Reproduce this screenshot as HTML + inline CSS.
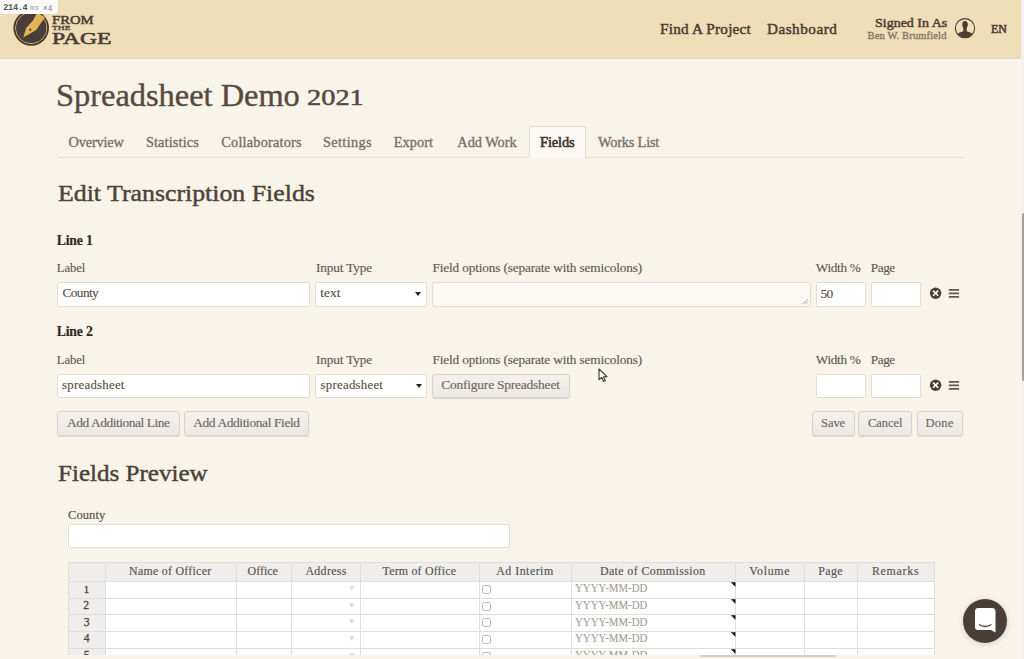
<!DOCTYPE html>
<html><head><meta charset="utf-8"><style>
html,body{margin:0;padding:0;}
body{width:1024px;height:659px;overflow:hidden;position:relative;background:#f9f4ea;font-family:"Liberation Serif",serif;}
.tx{position:absolute;white-space:nowrap;line-height:1;}
.bx{position:absolute;box-sizing:border-box;}
.inp{position:absolute;box-sizing:border-box;background:#fff;border:1px solid #e2ddd6;border-radius:2px;}
.btn{position:absolute;box-sizing:border-box;border:1px solid #d9d3cb;border-radius:3px;background:linear-gradient(#f4f1ee,#ece8e4);box-shadow:0 1px 1px rgba(0,0,0,0.12);}
</style></head><body>
<!-- header -->
<div class="bx" style="left:0;top:0;width:1021px;height:58px;background:#f0deb9"></div>
<div class="bx" style="left:0;top:57px;width:1021px;height:1px;background:#e9d9c0"></div>
<div class="bx" style="left:0;top:58px;width:1021px;height:1px;background:#e4d8c8"></div>
<div class="bx" style="left:0;top:59px;width:1021px;height:2px;background:#fcf6ec"></div>
<div class="bx" style="left:1021px;top:0;width:3px;height:659px;background:#f1f0ee"></div>
<div class="bx" style="left:1022px;top:213px;width:2px;height:168px;background:#a3a19e;border-radius:1px"></div>
<!-- logo -->
<svg class="bx" style="left:12px;top:9px" width="38" height="38" viewBox="0 0 38 38">
<circle cx="19.2" cy="19" r="17.8" fill="#4d3a26"/>
<circle cx="19.2" cy="19" r="15.6" fill="none" stroke="#c9b28c" stroke-width="1"/>
<circle cx="19.2" cy="19" r="15" fill="#4a3d3a"/>
<path d="M11.2 28.6 L14.3 18.8 L21 11.6 L25.2 3.5 L28.5 5.5 L33 8.5 L28 15.5 L24.2 21 Z" fill="#e3b456"/>
<circle cx="18.2" cy="20.6" r="1.2" fill="#4a3d3a"/>
</svg>
<div class="bx" style="left:0;top:0;width:58px;height:13.5px;background:#fdfdfc;border-bottom-right-radius:4px;box-shadow:0 0 1px rgba(0,0,0,0.2)"></div>
<!-- avatar -->
<svg class="bx" style="left:954px;top:17px" width="22" height="22" viewBox="0 0 22 22">
<circle cx="11" cy="11.2" r="9.6" fill="none" stroke="#4a3d31" stroke-width="1.1"/>
<clipPath id="cc"><circle cx="11" cy="11.2" r="9.1"/></clipPath>
<g clip-path="url(#cc)" fill="#4a3d31"><ellipse cx="11" cy="7.6" rx="2.8" ry="3.7"/><path d="M9.3 10 H12.7 V15 H9.3Z"/><path d="M1 22 Q1.8 16 8.5 14.6 L13.5 14.6 Q20.2 16 21 22 Z"/></g>
</svg>
<!-- tabs -->
<div class="bx" style="left:57px;top:157px;width:907px;height:1px;background:#e3ddd4"></div>
<div class="bx" style="left:529px;top:126px;width:57px;height:32px;background:#fcf8f4;border:1px solid #e3ddd4;border-bottom:none;border-radius:3px 3px 0 0"></div>
<!-- line 1 inputs -->
<div class="inp" style="left:57px;top:281.5px;width:253px;height:25px"></div>
<div class="inp" style="left:315px;top:282px;width:112px;height:24.5px"></div>
<svg class="bx" style="left:415px;top:292px" width="6" height="5"><path d="M0 0H6L3 4Z" fill="#222"/></svg>
<div class="inp" style="left:432px;top:281.5px;width:378.5px;height:25px;background:#fbf8f4"></div>
<svg class="bx" style="left:802px;top:298px" width="7" height="7"><path d="M6 1L1 6M6 3.5L3.5 6" stroke="#999" stroke-width="0.8"/></svg>
<div class="inp" style="left:815.5px;top:281.5px;width:50.5px;height:25px"></div>
<div class="inp" style="left:870.5px;top:281.5px;width:50.5px;height:25px"></div>
<!-- line 2 inputs -->
<div class="inp" style="left:57px;top:373.5px;width:253px;height:24.5px"></div>
<div class="inp" style="left:315px;top:373.8px;width:112px;height:24px"></div>
<svg class="bx" style="left:415.5px;top:383.5px" width="6" height="5"><path d="M0 0H6L3 4Z" fill="#222"/></svg>
<div class="btn" style="left:432px;top:373.5px;width:138px;height:24.5px"></div>
<div class="inp" style="left:815.5px;top:373.5px;width:50.5px;height:24.5px"></div>
<div class="inp" style="left:870.5px;top:373.5px;width:50.5px;height:24.5px"></div>
<!-- icons -->
<svg class="bx" style="left:929px;top:287px" width="13" height="13" viewBox="0 0 13 13"><circle cx="6.6" cy="6.2" r="5.7" fill="#4a3e36"/><path d="M4 3.6L9.2 8.8M9.2 3.6L4 8.8" stroke="#fff" stroke-width="1.6"/></svg>
<svg class="bx" style="left:948px;top:288px" width="12" height="11"><path d="M0.8 1.8H11.1M0.8 5.3H11.1M0.8 8.8H11.1" stroke="#64584f" stroke-width="1.8"/></svg>
<svg class="bx" style="left:929px;top:379px" width="13" height="13" viewBox="0 0 13 13"><circle cx="6.6" cy="6.2" r="5.7" fill="#4a3e36"/><path d="M4 3.6L9.2 8.8M9.2 3.6L4 8.8" stroke="#fff" stroke-width="1.6"/></svg>
<svg class="bx" style="left:948px;top:380px" width="12" height="11"><path d="M0.8 1.8H11.1M0.8 5.3H11.1M0.8 8.8H11.1" stroke="#64584f" stroke-width="1.8"/></svg>
<!-- buttons -->
<div class="btn" style="left:57px;top:411px;width:122.5px;height:24.5px"></div>
<div class="btn" style="left:184px;top:411px;width:125px;height:24.5px"></div>
<div class="btn" style="left:812px;top:411px;width:42.5px;height:24.5px"></div>
<div class="btn" style="left:858px;top:411px;width:54px;height:24.5px"></div>
<div class="btn" style="left:917px;top:411px;width:46px;height:24.5px"></div>
<!-- cursor -->
<svg class="bx" style="left:598px;top:368px" width="11" height="15" viewBox="0 0 11 15"><path d="M1 1V11.6L3.7 9.3L5.6 13.4L7.3 12.6L5.5 8.7H9Z" fill="#fbfbfb" stroke="#3a3633" stroke-width="1.1" stroke-linejoin="round"/></svg>
<!-- preview -->
<div class="inp" style="left:68px;top:523.5px;width:442px;height:24.5px"></div>
<div class="bx" style="left:68px;top:562px;width:867px;height:19px;background:#efeeec"></div>
<div class="bx" style="left:68px;top:581px;width:37px;height:78px;background:#efeeec"></div>
<div class="bx" style="left:105px;top:581px;width:829px;height:78px;background:#fff"></div>
<div class="bx" style="left:68px;top:562px;width:1px;height:93px;background:#dfdedc"></div>
<div class="bx" style="left:105px;top:562px;width:1px;height:93px;background:#dfdedc"></div>
<div class="bx" style="left:236px;top:562px;width:1px;height:93px;background:#dfdedc"></div>
<div class="bx" style="left:291px;top:562px;width:1px;height:93px;background:#dfdedc"></div>
<div class="bx" style="left:360px;top:562px;width:1px;height:93px;background:#dfdedc"></div>
<div class="bx" style="left:479px;top:562px;width:1px;height:93px;background:#dfdedc"></div>
<div class="bx" style="left:571px;top:562px;width:1px;height:93px;background:#dfdedc"></div>
<div class="bx" style="left:735px;top:562px;width:1px;height:93px;background:#dfdedc"></div>
<div class="bx" style="left:804px;top:562px;width:1px;height:93px;background:#dfdedc"></div>
<div class="bx" style="left:857px;top:562px;width:1px;height:93px;background:#dfdedc"></div>
<div class="bx" style="left:934px;top:562px;width:1px;height:93px;background:#dfdedc"></div>
<div class="bx" style="left:68px;top:562px;width:867px;height:1px;background:#dfdedc"></div>
<div class="bx" style="left:68px;top:581px;width:867px;height:1px;background:#dfdedc"></div>
<div class="bx" style="left:68px;top:598px;width:867px;height:1px;background:#dfdedc"></div>
<div class="bx" style="left:68px;top:614px;width:867px;height:1px;background:#dfdedc"></div>
<div class="bx" style="left:68px;top:631px;width:867px;height:1px;background:#dfdedc"></div>
<div class="bx" style="left:68px;top:648px;width:867px;height:1px;background:#dfdedc"></div>
<div class="bx" style="left:68px;top:664px;width:867px;height:1px;background:#dfdedc"></div>
<div class="bx" style="left:482px;top:585.0px;width:9px;height:9px;border:1px solid #b9b5b0;border-radius:2.5px;background:#fff"></div>
<svg class="bx" style="left:348.5px;top:586px" width="6" height="5"><path d="M0 0.2H5.5L2.75 4.8Z" fill="#dddbd8"/></svg>
<svg class="bx" style="left:730.5px;top:582px" width="5" height="5"><path d="M0.3 0.5H4.2V4.3Z" fill="#1e1a18" stroke="#1e1a18" stroke-width="0.6" stroke-linejoin="round"/></svg>
<div class="bx" style="left:482px;top:602.0px;width:9px;height:9px;border:1px solid #b9b5b0;border-radius:2.5px;background:#fff"></div>
<svg class="bx" style="left:348.5px;top:603px" width="6" height="5"><path d="M0 0.2H5.5L2.75 4.8Z" fill="#dddbd8"/></svg>
<svg class="bx" style="left:730.5px;top:599px" width="5" height="5"><path d="M0.3 0.5H4.2V4.3Z" fill="#1e1a18" stroke="#1e1a18" stroke-width="0.6" stroke-linejoin="round"/></svg>
<div class="bx" style="left:482px;top:618.0px;width:9px;height:9px;border:1px solid #b9b5b0;border-radius:2.5px;background:#fff"></div>
<svg class="bx" style="left:348.5px;top:619px" width="6" height="5"><path d="M0 0.2H5.5L2.75 4.8Z" fill="#dddbd8"/></svg>
<svg class="bx" style="left:730.5px;top:615px" width="5" height="5"><path d="M0.3 0.5H4.2V4.3Z" fill="#1e1a18" stroke="#1e1a18" stroke-width="0.6" stroke-linejoin="round"/></svg>
<div class="bx" style="left:482px;top:635.0px;width:9px;height:9px;border:1px solid #b9b5b0;border-radius:2.5px;background:#fff"></div>
<svg class="bx" style="left:348.5px;top:636px" width="6" height="5"><path d="M0 0.2H5.5L2.75 4.8Z" fill="#dddbd8"/></svg>
<svg class="bx" style="left:730.5px;top:632px" width="5" height="5"><path d="M0.3 0.5H4.2V4.3Z" fill="#1e1a18" stroke="#1e1a18" stroke-width="0.6" stroke-linejoin="round"/></svg>
<div class="bx" style="left:482px;top:652.0px;width:9px;height:9px;border:1px solid #b9b5b0;border-radius:2.5px;background:#fff"></div>
<svg class="bx" style="left:348.5px;top:653px" width="6" height="5"><path d="M0 0.2H5.5L2.75 4.8Z" fill="#dddbd8"/></svg>
<svg class="bx" style="left:730.5px;top:649px" width="5" height="5"><path d="M0.3 0.5H4.2V4.3Z" fill="#1e1a18" stroke="#1e1a18" stroke-width="0.6" stroke-linejoin="round"/></svg>
<!-- chat -->
<div class="bx" style="left:963px;top:598.5px;width:44px;height:44px;border-radius:50%;background:#4a3f38;box-shadow:0 1px 6px rgba(0,0,0,0.15)"></div>
<svg class="bx" style="left:974px;top:607px" width="23" height="27" viewBox="0 0 23 27"><path d="M4 1H18Q21.5 1 21.5 4.5V25.5L17 23H4Q1 23 1 20V4.5Q1 1 4 1Z" fill="#fff"/><path d="M5 17.5Q11 21.5 17.5 17.5" fill="none" stroke="#4a3f38" stroke-width="1.3"/></svg>
<div id="t0" class="tx" style="left:660.00px;top:21.27px;font-size:15.20px;font-weight:400;color:#4a3d31;letter-spacing:0.231px;-webkit-text-stroke:0.50px #4a3d31;">Find A Project</div>
<div id="t1" class="tx" style="left:767.00px;top:21.27px;font-size:15.20px;font-weight:400;color:#4a3d31;letter-spacing:0.500px;-webkit-text-stroke:0.50px #4a3d31;">Dashboard</div>
<div id="t2" class="tx" style="left:874.50px;top:16.55px;font-size:12.60px;font-weight:400;color:#4a3d31;letter-spacing:0.000px;-webkit-text-stroke:0.45px #4a3d31;transform:scaleX(1.1109);transform-origin:0 0;">Signed In As</div>
<div id="t3" class="tx" style="left:867.60px;top:30.71px;font-size:10.53px;font-weight:400;color:#85786a;letter-spacing:0.133px;-webkit-text-stroke:0.35px #85786a;">Ben W. Brumfield</div>
<div id="t4" class="tx" style="left:990.50px;top:22.05px;font-size:13.44px;font-weight:400;color:#4a3d31;letter-spacing:0.000px;-webkit-text-stroke:0.60px #4a3d31;transform:scaleX(0.8889);transform-origin:0 0;">EN</div>
<div id="t5" class="tx" style="left:55.60px;top:80.99px;font-size:30.50px;font-weight:400;color:#564a40;letter-spacing:0.000px;-webkit-text-stroke:0.35px #564a40;transform:scaleX(1.0623);transform-origin:0 0;">Spreadsheet Demo</div>
<div id="t6" class="tx" style="left:306.80px;top:86.32px;font-size:23.50px;font-weight:400;color:#564a40;letter-spacing:0.000px;-webkit-text-stroke:0.50px #564a40;transform:scaleX(1.2092);transform-origin:0 0;">2021</div>
<div id="t7" class="tx" style="left:68.50px;top:134.98px;font-size:14.35px;font-weight:400;color:#776c63;letter-spacing:-0.171px;-webkit-text-stroke:0.30px #776c63;">Overview</div>
<div id="t8" class="tx" style="left:145.90px;top:134.98px;font-size:14.35px;font-weight:400;color:#776c63;letter-spacing:0.133px;-webkit-text-stroke:0.30px #776c63;">Statistics</div>
<div id="t9" class="tx" style="left:221.30px;top:134.98px;font-size:14.35px;font-weight:400;color:#776c63;letter-spacing:0.183px;-webkit-text-stroke:0.30px #776c63;">Collaborators</div>
<div id="t10" class="tx" style="left:323.00px;top:134.98px;font-size:14.35px;font-weight:400;color:#776c63;letter-spacing:0.343px;-webkit-text-stroke:0.30px #776c63;">Settings</div>
<div id="t11" class="tx" style="left:393.80px;top:134.98px;font-size:14.35px;font-weight:400;color:#776c63;letter-spacing:0.020px;-webkit-text-stroke:0.30px #776c63;">Export</div>
<div id="t12" class="tx" style="left:457.30px;top:134.98px;font-size:14.35px;font-weight:400;color:#776c63;letter-spacing:-0.029px;-webkit-text-stroke:0.30px #776c63;">Add Work</div>
<div id="t13" class="tx" style="left:598.10px;top:134.98px;font-size:14.35px;font-weight:400;color:#776c63;letter-spacing:-0.200px;-webkit-text-stroke:0.30px #776c63;">Works List</div>
<div id="t14" class="tx" style="left:540.00px;top:134.98px;font-size:14.35px;font-weight:400;color:#3e342c;letter-spacing:-0.080px;-webkit-text-stroke:0.60px #3e342c;">Fields</div>
<div id="t15" class="tx" style="left:57.90px;top:180.52px;font-size:24.10px;font-weight:400;color:#4d4238;letter-spacing:0.000px;-webkit-text-stroke:0.45px #4d4238;transform:scaleX(1.0720);transform-origin:0 0;">Edit Transcription Fields</div>
<div id="t16" class="tx" style="left:57.80px;top:460.52px;font-size:24.10px;font-weight:400;color:#4d4238;letter-spacing:0.000px;-webkit-text-stroke:0.45px #4d4238;transform:scaleX(1.0403);transform-origin:0 0;">Fields Preview</div>
<div id="t17" class="tx" style="left:56.80px;top:233.68px;font-size:13.74px;font-weight:700;color:#2f2822;letter-spacing:-0.200px;-webkit-text-stroke:0.15px #2f2822;">Line 1</div>
<div id="t18" class="tx" style="left:56.80px;top:262.09px;font-size:12.67px;font-weight:400;color:#62584f;letter-spacing:-0.100px;-webkit-text-stroke:0.15px #62584f;">Label</div>
<div id="t19" class="tx" style="left:316.00px;top:261.28px;font-size:13.28px;font-weight:400;color:#62584f;letter-spacing:-0.133px;-webkit-text-stroke:0.15px #62584f;">Input Type</div>
<div id="t20" class="tx" style="left:432.40px;top:261.28px;font-size:13.28px;font-weight:400;color:#62584f;letter-spacing:-0.138px;-webkit-text-stroke:0.15px #62584f;">Field options (separate with semicolons)</div>
<div id="t21" class="tx" style="left:815.80px;top:261.28px;font-size:13.28px;font-weight:400;color:#62584f;letter-spacing:-0.333px;-webkit-text-stroke:0.15px #62584f;">Width %</div>
<div id="t22" class="tx" style="left:870.80px;top:261.28px;font-size:13.28px;font-weight:400;color:#62584f;letter-spacing:-0.467px;-webkit-text-stroke:0.15px #62584f;">Page</div>
<div id="t23" class="tx" style="left:56.80px;top:324.89px;font-size:13.74px;font-weight:700;color:#2f2822;letter-spacing:-0.200px;-webkit-text-stroke:0.15px #2f2822;">Line 2</div>
<div id="t24" class="tx" style="left:56.80px;top:353.58px;font-size:12.67px;font-weight:400;color:#62584f;letter-spacing:-0.100px;-webkit-text-stroke:0.15px #62584f;">Label</div>
<div id="t25" class="tx" style="left:316.00px;top:352.98px;font-size:13.28px;font-weight:400;color:#62584f;letter-spacing:-0.133px;-webkit-text-stroke:0.15px #62584f;">Input Type</div>
<div id="t26" class="tx" style="left:432.40px;top:352.98px;font-size:13.28px;font-weight:400;color:#62584f;letter-spacing:-0.138px;-webkit-text-stroke:0.15px #62584f;">Field options (separate with semicolons)</div>
<div id="t27" class="tx" style="left:815.80px;top:352.98px;font-size:13.28px;font-weight:400;color:#62584f;letter-spacing:-0.333px;-webkit-text-stroke:0.15px #62584f;">Width %</div>
<div id="t28" class="tx" style="left:870.80px;top:352.98px;font-size:13.28px;font-weight:400;color:#62584f;letter-spacing:-0.467px;-webkit-text-stroke:0.15px #62584f;">Page</div>
<div id="t29" class="tx" style="left:62.40px;top:286.18px;font-size:13.28px;font-weight:400;color:#5a5048;letter-spacing:-0.540px;-webkit-text-stroke:0.15px #5a5048;">County</div>
<div id="t30" class="tx" style="left:320.20px;top:286.16px;font-size:13.30px;font-weight:400;color:#5a5048;letter-spacing:0.133px;-webkit-text-stroke:0.15px #5a5048;">text</div>
<div id="t31" class="tx" style="left:820.60px;top:286.77px;font-size:13.44px;font-weight:400;color:#5a5048;letter-spacing:-0.800px;-webkit-text-stroke:0.15px #5a5048;">50</div>
<div id="t32" class="tx" style="left:62.10px;top:378.98px;font-size:12.80px;font-weight:400;color:#5a5048;letter-spacing:0.260px;-webkit-text-stroke:0.15px #5a5048;">spreadsheet</div>
<div id="t33" class="tx" style="left:320.60px;top:378.98px;font-size:12.80px;font-weight:400;color:#5a5048;letter-spacing:0.260px;-webkit-text-stroke:0.15px #5a5048;">spreadsheet</div>
<div id="t34" class="tx" style="left:441.30px;top:378.05px;font-size:13.44px;font-weight:400;color:#70665e;letter-spacing:-0.210px;-webkit-text-stroke:0.15px #70665e;">Configure Spreadsheet</div>
<div id="t35" class="tx" style="left:67.00px;top:415.95px;font-size:13.44px;font-weight:400;color:#70665e;letter-spacing:-0.456px;-webkit-text-stroke:0.15px #70665e;">Add Additional Line</div>
<div id="t36" class="tx" style="left:193.20px;top:415.95px;font-size:13.44px;font-weight:400;color:#70665e;letter-spacing:-0.389px;-webkit-text-stroke:0.15px #70665e;">Add Additional Field</div>
<div id="t37" class="tx" style="left:821.00px;top:416.71px;font-size:12.52px;font-weight:400;color:#70665e;letter-spacing:-0.067px;-webkit-text-stroke:0.15px #70665e;">Save</div>
<div id="t38" class="tx" style="left:868.00px;top:416.71px;font-size:12.52px;font-weight:400;color:#70665e;letter-spacing:-0.040px;-webkit-text-stroke:0.15px #70665e;">Cancel</div>
<div id="t39" class="tx" style="left:925.40px;top:416.71px;font-size:12.52px;font-weight:400;color:#70665e;letter-spacing:0.267px;-webkit-text-stroke:0.15px #70665e;">Done</div>
<div id="t40" class="tx" style="left:68.00px;top:508.69px;font-size:12.67px;font-weight:400;color:#5a5048;letter-spacing:0.000px;-webkit-text-stroke:0.15px #5a5048;">County</div>
<div id="t41" class="tx" style="left:129.10px;top:565.53px;font-size:11.91px;font-weight:400;color:#57524d;letter-spacing:0.257px;-webkit-text-stroke:0.15px #57524d;">Name of Officer</div>
<div id="t42" class="tx" style="left:247.60px;top:565.53px;font-size:11.91px;font-weight:400;color:#57524d;letter-spacing:0.000px;-webkit-text-stroke:0.15px #57524d;">Office</div>
<div id="t43" class="tx" style="left:305.40px;top:565.53px;font-size:11.91px;font-weight:400;color:#57524d;letter-spacing:0.333px;-webkit-text-stroke:0.15px #57524d;">Address</div>
<div id="t44" class="tx" style="left:382.60px;top:565.53px;font-size:11.91px;font-weight:400;color:#57524d;letter-spacing:0.185px;-webkit-text-stroke:0.15px #57524d;">Term of Office</div>
<div id="t45" class="tx" style="left:496.20px;top:565.53px;font-size:11.91px;font-weight:400;color:#57524d;letter-spacing:0.489px;-webkit-text-stroke:0.15px #57524d;">Ad Interim</div>
<div id="t46" class="tx" style="left:599.90px;top:565.53px;font-size:11.91px;font-weight:400;color:#57524d;letter-spacing:0.400px;-webkit-text-stroke:0.15px #57524d;">Date of Commission</div>
<div id="t47" class="tx" style="left:749.30px;top:565.53px;font-size:11.91px;font-weight:400;color:#57524d;letter-spacing:0.680px;-webkit-text-stroke:0.15px #57524d;">Volume</div>
<div id="t48" class="tx" style="left:818.20px;top:565.53px;font-size:11.91px;font-weight:400;color:#57524d;letter-spacing:0.400px;-webkit-text-stroke:0.15px #57524d;">Page</div>
<div id="t49" class="tx" style="left:871.90px;top:565.53px;font-size:11.91px;font-weight:400;color:#57524d;letter-spacing:0.733px;-webkit-text-stroke:0.15px #57524d;">Remarks</div>
<div id="t50" class="tx" style="left:52.00px;top:14.15px;font-size:12.60px;font-weight:400;color:#4a3e35;letter-spacing:0.000px;-webkit-text-stroke:0.50px #4a3e35;transform:scaleX(1.1667);transform-origin:0 0;">FROM</div>
<div id="t51" class="tx" style="left:52.00px;top:25.14px;font-size:7.00px;font-weight:400;color:#4a3e35;letter-spacing:0.000px;-webkit-text-stroke:0.30px #4a3e35;transform:scaleX(1.3571);transform-origin:0 0;">THE</div>
<div id="t52" class="tx" style="left:52.00px;top:30.93px;font-size:16.80px;font-weight:400;color:#4a3e35;letter-spacing:0.000px;-webkit-text-stroke:0.60px #4a3e35;transform:scaleX(1.4048);transform-origin:0 0;">PAGE</div>
<div id="t53" class="tx" style="left:3.30px;top:3.50px;font-size:8.60px;font-weight:700;color:#555;letter-spacing:-0.350px;font-family:'Liberation Mono',monospace;">214.4</div>
<div id="t54" class="tx" style="left:30.00px;top:5.12px;font-size:7.50px;font-weight:400;color:#9a9a9a;letter-spacing:0.000px;font-family:'Liberation Mono',monospace;transform:scaleX(1.0000);transform-origin:0 0;">ms</div>
<div id="t55" class="tx" style="left:43.00px;top:4.90px;font-size:8.60px;font-weight:400;color:#777;letter-spacing:0.000px;font-family:'Liberation Mono',monospace;transform:scaleX(0.8982);transform-origin:0 0;">×4</div>
<div id="t56" class="tx" style="left:83.80px;top:584.12px;font-size:10.84px;font-weight:400;color:#4f463f;letter-spacing:0.000px;-webkit-text-stroke:0.30px #4f463f;">1</div>
<div id="t57" class="tx" style="left:83.30px;top:599.88px;font-size:11.60px;font-weight:400;color:#4f463f;letter-spacing:0.000px;-webkit-text-stroke:0.30px #4f463f;">2</div>
<div id="t58" class="tx" style="left:83.70px;top:616.78px;font-size:11.60px;font-weight:400;color:#4f463f;letter-spacing:0.000px;-webkit-text-stroke:0.30px #4f463f;">3</div>
<div id="t59" class="tx" style="left:83.80px;top:633.46px;font-size:11.60px;font-weight:400;color:#4f463f;letter-spacing:0.000px;-webkit-text-stroke:0.30px #4f463f;">4</div>
<div id="t60" class="tx" style="left:83.70px;top:649.79px;font-size:11.60px;font-weight:400;color:#4f463f;letter-spacing:0.000px;-webkit-text-stroke:0.30px #4f463f;">5</div>
<div id="t61" class="tx" style="left:575.00px;top:582.53px;font-size:11.91px;font-weight:400;color:#a49d96;letter-spacing:0.000px;-webkit-text-stroke:0.10px #a49d96;transform:scaleX(0.9114);transform-origin:0 0;">YYYY-MM-DD</div>
<div id="t62" class="tx" style="left:575.00px;top:599.90px;font-size:11.91px;font-weight:400;color:#a49d96;letter-spacing:0.000px;-webkit-text-stroke:0.10px #a49d96;transform:scaleX(0.9114);transform-origin:0 0;">YYYY-MM-DD</div>
<div id="t63" class="tx" style="left:575.00px;top:616.71px;font-size:11.91px;font-weight:400;color:#a49d96;letter-spacing:0.000px;-webkit-text-stroke:0.10px #a49d96;transform:scaleX(0.9114);transform-origin:0 0;">YYYY-MM-DD</div>
<div id="t64" class="tx" style="left:575.00px;top:633.24px;font-size:11.91px;font-weight:400;color:#a49d96;letter-spacing:0.000px;-webkit-text-stroke:0.10px #a49d96;transform:scaleX(0.9114);transform-origin:0 0;">YYYY-MM-DD</div>
<div id="t65" class="tx" style="left:575.00px;top:649.56px;font-size:11.91px;font-weight:400;color:#a49d96;letter-spacing:0.000px;-webkit-text-stroke:0.10px #a49d96;transform:scaleX(0.9114);transform-origin:0 0;">YYYY-MM-DD</div>
<div class="bx" style="left:0;top:655px;width:1021px;height:4px;background:#f9f4ea"></div>
<div class="bx" style="left:700px;top:655px;width:136px;height:2px;background:#d3cec8;border-radius:1px"></div>
</body></html>
